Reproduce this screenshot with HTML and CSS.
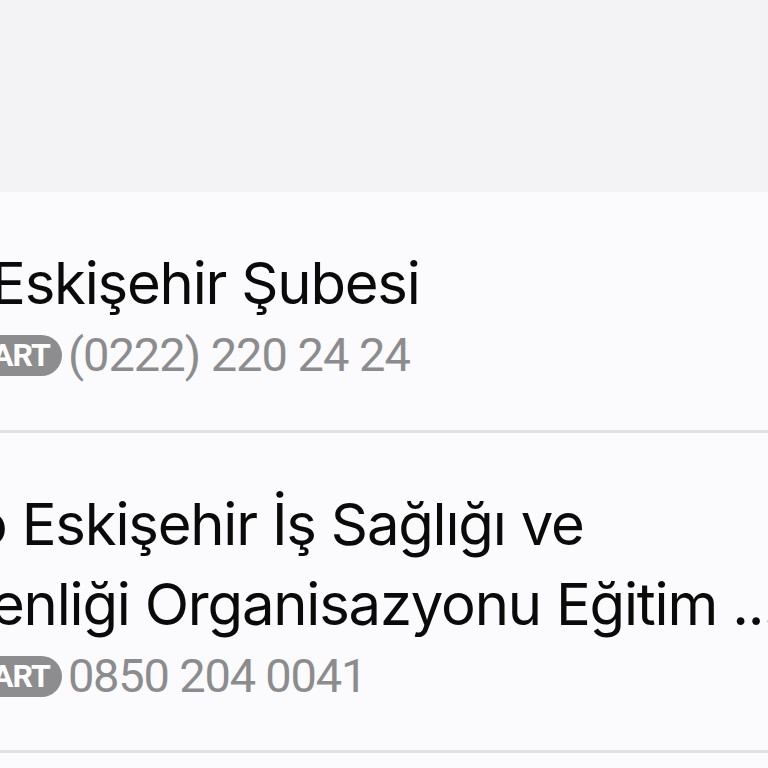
FILE: index.html
```html
<!DOCTYPE html>
<html lang="tr">
<head>
<meta charset="utf-8">
<link rel="stylesheet" href="styles.css">
</head>
<body>
<div class="top"></div>
<ul class="list">
  <li class="item item-1">
    <div class="title"><span class="line l1">Eskişehir Şubesi</span></div>
    <div class="meta"><span class="badge">ART</span><span class="phone p1">(0222) 220 24 24</span></div>
  </li>
  <li class="item item-2">
    <div class="title"><span class="line l2">o Eskişehir İş Sağlığı ve</span><span class="line l3">enliği Organisazyonu Eğitim ...</span></div>
    <div class="meta"><span class="badge">ART</span><span class="phone p2">0850 204 0041</span></div>
  </li>
  <li class="item item-3"></li>
</ul>
</body>
</html>
```

FILE: styles.css
```css
html, body {
  margin: 0;
  padding: 0;
  width: 768px;
  height: 768px;
  overflow: hidden;
  background: #fbfbfd;
}
.top {
  height: 192px;
  background: #f3f3f5;
}
.list {
  list-style: none;
  margin: 0;
  padding: 0;
}
.item {
  border-bottom: 3px solid #e1e1e3;
  display: flex;
  flex-direction: column;
  overflow: hidden;
  white-space: nowrap;
}
.item-1 { height: 238px; }
.item-2 { height: 317px; }
.item-3 { height: 20px; border-bottom: 0; }
.title {
  display: flex;
  flex-direction: column;
  font-family: Inter, "Noto Sans", sans-serif;
  font-size: 58px;
  color: #0a0a0a;
  letter-spacing: -1.2px;
}
.line { display: block; line-height: 80px; }
.item-1 .title { margin-top: 51px; }
.item-2 .title { margin-top: 51px; }
.l1 { margin-left: -9px; }
.l2 { margin-left: -27px; }
.l3 { margin-left: -9px; }
.meta {
  display: flex;
  align-items: center;
  gap: 6px;
  margin-top: 2px;
}
.badge {
  background: #8d8d8f;
  color: #fff;
  font-family: Roboto, "Liberation Sans", sans-serif;
  font-weight: 700;
  font-size: 32px;
  height: 41px;
  line-height: 41px;
  border-radius: 0 21px 21px 0;
  padding: 0 12px 0 0;
  margin-left: -8px;
  letter-spacing: -1px;
}
.phone {
  font-family: Roboto, "Liberation Sans", sans-serif;
  font-size: 47px;
  color: #8c8c8e;
  line-height: 60px;
}
.p1 { letter-spacing: -1px; }
.p2 { letter-spacing: -1.2px; }
```
